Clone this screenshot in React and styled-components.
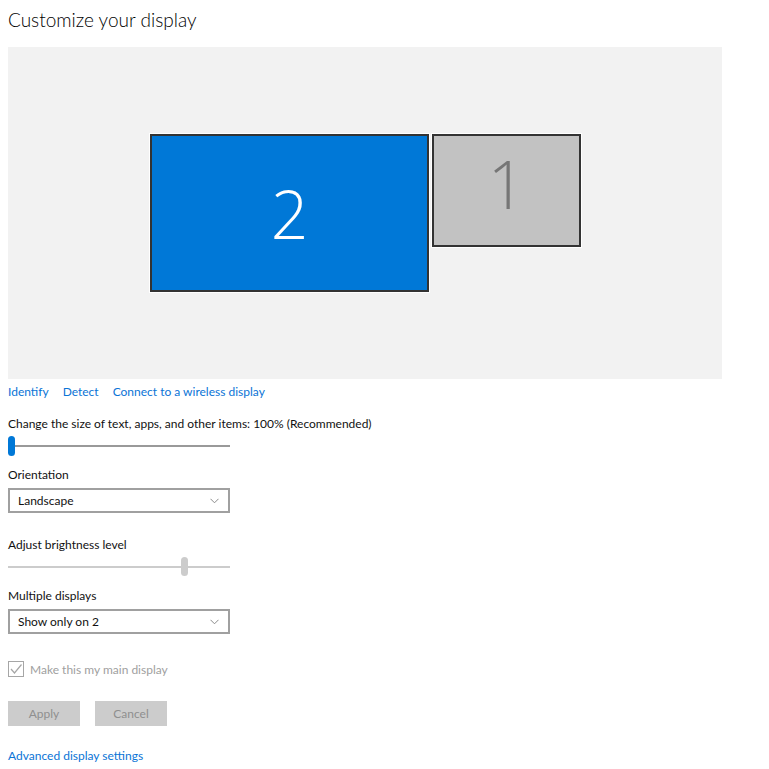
import React from 'react'
import styled, { createGlobalStyle } from 'styled-components'

const GlobalStyle = createGlobalStyle`
    html, body {
        margin: 0;
        padding: 0;
        background: #ffffff;
    }
    body {
        font-family: Lato, "Liberation Sans", sans-serif;
        color: #000000;
    }
`

const Chevron = () => (
    <svg width="9" height="6" viewBox="0 0 9 6">
        <path d="M0.5 0.8 L4.5 4.8 L8.5 0.8" fill="none" stroke="#8a8a8a" strokeWidth="1" />
    </svg>
)

const Check = () => (
    <svg width="14" height="14" viewBox="0 0 14 14">
        <path d="M2 7 L5.5 11 L12.5 2.5" fill="none" stroke="#a6a6a6" strokeWidth="1.2" />
    </svg>
)

const App = () => {
    return (
        <Page>
            <GlobalStyle />
            <Title>Customize your display</Title>
            <Preview>
                <Monitor $w={279} $h={158} $active>
                    <MonitorNum $size={66} $active>2</MonitorNum>
                </Monitor>
                <Monitor $w={149} $h={113}>
                    <MonitorNum $size={66}>1</MonitorNum>
                </Monitor>
            </Preview>
            <Links>
                <Link>Identify</Link>
                <Link>Detect</Link>
                <Link>Connect to a wireless display</Link>
            </Links>

            <Label $mt={13}>Change the size of text, apps, and other items: 100% (Recommended)</Label>
            <Slider $mt={4} $h={20}>
                <Track $color="#999999" />
                <Thumb $left={0} $color="#0078d7" $h={20} />
            </Slider>

            <Label $mt={9}>Orientation</Label>
            <Select $mt={5}>
                <span>Landscape</span>
                <Chevron />
            </Select>

            <Label $mt={22}>Adjust brightness level</Label>
            <Slider $mt={4} $h={19}>
                <Track $color="#cccccc" />
                <Thumb $left={173} $color="#cccccc" $h={19} />
            </Slider>

            <Label $mt={10}>Multiple displays</Label>
            <Select $mt={5}>
                <span>Show only on 2</span>
                <Chevron />
            </Select>

            <CheckRow>
                <Box><Check /></Box>
                <CheckText>Make this my main display</CheckText>
            </CheckRow>

            <Buttons>
                <Button>Apply</Button>
                <Button>Cancel</Button>
            </Buttons>

            <Footer>
                <Link>Advanced display settings</Link>
            </Footer>
        </Page>
    )
}

export default App

const Page = styled.div`
    padding: 0 8px;
    width: 753px;
    height: 769px;
    box-sizing: border-box;
    font-size: 12px;
`

const Title = styled.h1`
    margin: 7px 0 0;
    font-size: 19px;
    line-height: 26px;
    font-weight: 300;
    color: #000;
`

const Preview = styled.div`
    margin-top: 14px;
    width: 714px;
    height: 332px;
    background: #f2f2f2;
    box-sizing: border-box;
    padding: 87px 0 0 142px;
    display: flex;
    align-items: flex-start;
    gap: 3px;
`

const Monitor = styled.div`
    width: ${p => p.$w}px;
    height: ${p => p.$h}px;
    box-sizing: border-box;
    background: ${p => (p.$active ? '#0078d7' : '#c2c2c2')};
    border: 2px solid #333333;
    box-shadow: 0 0 0 1px #ffffff;
    display: flex;
    justify-content: center;
    align-items: center;
`

const MonitorNum = styled.span`
    font-family: "Open Sans", sans-serif;
    font-weight: 300;
    font-size: ${p => p.$size}px;
    line-height: 1;
    color: ${p => (p.$active ? '#ffffff' : '#767676')};
    margin-top: ${p => (p.$active ? 0 : -16)}px;
`

const Links = styled.div`
    margin-top: 3px;
    padding-top: 1px;
    display: flex;
    gap: 14px;
    line-height: 18px;
`

const Link = styled.span`
    color: #0a74d6;
    line-height: 18px;
    cursor: pointer;
`

const Label = styled.div`
    margin-top: ${p => p.$mt}px;
    padding-top: 1px;
    line-height: 18px;
    color: #111;
`

const Slider = styled.div`
    margin-top: ${p => p.$mt - 1}px;
    position: relative;
    width: 222px;
    height: ${p => p.$h}px;
    display: flex;
    align-items: center;
`

const Track = styled.div`
    width: 100%;
    height: 2px;
    background: ${p => p.$color};
`

const Thumb = styled.div`
    position: absolute;
    top: 0;
    left: ${p => p.$left}px;
    width: 7px;
    height: ${p => p.$h}px;
    border-radius: 4px;
    background: ${p => p.$color};
`

const Select = styled.div`
    margin-top: ${p => p.$mt - 1}px;
    width: 222px;
    height: 25px;
    box-sizing: border-box;
    border: 2px solid #a0a0a0;
    padding: 0 9px 0 8px;
    display: flex;
    justify-content: space-between;
    align-items: center;
    color: #111;
`

const CheckRow = styled.div`
    margin-top: 27px;
    display: flex;
    align-items: center;
    gap: 6px;
    height: 16px;
`

const Box = styled.div`
    width: 16px;
    height: 16px;
    box-sizing: border-box;
    border: 1px solid #a6a6a6;
    display: flex;
    justify-content: center;
    align-items: center;
`

const CheckText = styled.span`
    color: #a0a0a0;
`

const Buttons = styled.div`
    margin-top: 24px;
    display: flex;
    gap: 15px;
`

const Button = styled.div`
    width: 72px;
    height: 25px;
    background: #cccccc;
    color: #8f8f8f;
    display: flex;
    justify-content: center;
    align-items: center;
`

const Footer = styled.div`
    margin-top: 21px;
`
